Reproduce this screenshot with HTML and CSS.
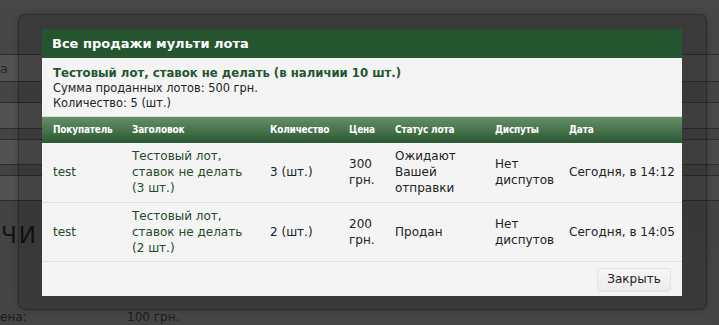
FILE: index.html
```html
<!DOCTYPE html>
<html lang="ru">
<head>
<meta charset="utf-8">
<title>Все продажи мульти лота</title>
<link rel="stylesheet" href="styles.css">
</head>
<body>
<div class="page">
  <div class="bg-row bg-row-a"><span class="bg-cell">а</span><span class="bg-cell bg-faint">Тар</span></div>
  <div class="bg-row bg-row-b"></div>
  <div class="bg-row bg-row-c"></div>
  <div class="bg-row bg-row-d"></div>
  <div class="bg-heading">ЧИ</div>
  <div class="bg-line"><span class="bg-label">ена:</span><span class="bg-value">100 грн.</span></div>
</div>

<div class="overlay">
  <div class="modal">
    <div class="modal-header">Все продажи мульти лота</div>
    <div class="modal-info">
      <div class="lot-title">Тестовый лот, ставок не делать (в наличии 10 шт.)</div>
      <div>Сумма проданных лотов: 500 грн.</div>
      <div>Количество: 5 (шт.)</div>
    </div>
    <table class="sales">
      <colgroup>
        <col class="c1"><col class="c2"><col class="c3"><col class="c4"><col class="c5"><col class="c6"><col class="c7">
      </colgroup>
      <thead>
        <tr>
          <th>Покупатель</th><th>Заголовок</th><th>Количество</th><th>Цена</th><th>Статус лота</th><th>Диспуты</th><th>Дата</th>
        </tr>
      </thead>
      <tbody>
        <tr>
          <td class="green">test</td>
          <td class="green">Тестовый лот, ставок не делать (3 шт.)</td>
          <td>3 (шт.)</td>
          <td>300 грн.</td>
          <td>Ожидают Вашей отправки</td>
          <td>Нет диспутов</td>
          <td>Сегодня, в 14:12</td>
        </tr>
        <tr>
          <td class="green">test</td>
          <td class="green">Тестовый лот, ставок не делать (2 шт.)</td>
          <td>2 (шт.)</td>
          <td>200 грн.</td>
          <td>Продан</td>
          <td>Нет диспутов</td>
          <td>Сегодня, в 14:05</td>
        </tr>
      </tbody>
    </table>
    <div class="modal-footer">
      <button class="btn">Закрыть</button>
    </div>
  </div>
</div>
</body>
</html>
```

FILE: styles.css
```css
* { box-sizing: border-box; }

html, body {
  margin: 0;
  padding: 0;
}

body {
  width: 719px;
  height: 325px;
  overflow: hidden;
  background: linear-gradient(#474747, #424242 60%, #454545);
  font-family: "DejaVu Sans", Verdana, sans-serif;
  position: relative;
}

/* dimmed page behind the dialog */
.page {
  padding-top: 54px;
  color: #1c1c1c;
}

.bg-row {
  border-top: 1px solid #2e2e2e;
  border-bottom: 1px solid #2e2e2e;
  background: linear-gradient(90deg, #525252, #4a4a4a);
  font-size: 13px;
}

.bg-row-a { height: 28px; margin-bottom: 20px; display: flex; align-items: center; gap: 8px; }
.bg-row-b { height: 27px; margin-bottom: 10px; }
.bg-row-c { height: 26px; margin-bottom: 10px; }
.bg-row-d { height: 26px; }

.bg-cell { color: #262626; }
.bg-faint { color: #555; }

.bg-heading {
  font-size: 23px;
  line-height: 30px;
  height: 30px;
  margin-top: 19px;
  margin-left: 1px;
  letter-spacing: 2px;
  color: #141414;
}

.bg-line {
  margin-top: 60px;
  display: flex;
  font-size: 12px;
  line-height: 15px;
  color: #1a1a1a;
}

.bg-label { width: 127px; }

/* dialog */
.overlay {
  position: absolute;
  left: 18px;
  top: 14px;
  width: 689px;
  height: 296px;
  background: rgba(0, 0, 0, 0.16);
  border: 1px solid rgba(0, 0, 0, 0.25);
  border-radius: 7px;
  padding: 14px 24px 0 23px;
  box-shadow: 0 0 6px rgba(0, 0, 0, 0.2);
}

.modal {
  width: 640px;
  height: 267px;
  background: #f4f4f4;
  display: flex;
  flex-direction: column;
  font-size: 12px;
  color: #222;
}

.modal-header {
  height: 29px;
  background: #24552f;
  color: #fff;
  font-weight: bold;
  font-size: 13px;
  line-height: 29px;
  padding-left: 10px;
}

.modal-info {
  padding: 7px 11px 5px;
  line-height: 15px;
  font-size: 11.4px;
  border-bottom: 1px solid #dcdcdc;
}

.lot-title {
  color: #24552f;
  font-weight: bold;
  font-size: 11.7px;
  line-height: 16px;
}

.sales {
  width: 640px;
  border-collapse: collapse;
  table-layout: fixed;
}

.c1 { width: 79px; }
.c2 { width: 138px; }
.c3 { width: 79px; }
.c4 { width: 46px; }
.c5 { width: 100px; }
.c6 { width: 74px; }
.c7 { width: 124px; }

.sales th {
  background: linear-gradient(#668f68, #2a5832);
  color: #fff;
  font-family: "DejaVu Sans Condensed", "DejaVu Sans", sans-serif;
  font-weight: bold;
  font-size: 10px;
  letter-spacing: -0.2px;
  text-align: left;
  height: 26px;
  padding: 0 4px 0 11px;
  line-height: 16px;
}

.sales td {
  height: 59px;
  padding: 0 6px 0 11px;
  line-height: 16px;
  vertical-align: middle;
  border-bottom: 1px solid #e0e0e0;
  color: #222;
}

.sales td.green { color: #24482b; }

.modal-footer {
  flex: 1;
  display: flex;
  justify-content: flex-end;
  align-items: flex-start;
  padding: 6px 11px 0 0;
}

.btn {
  width: 74px;
  height: 23px;
  font-family: "DejaVu Sans", Verdana, sans-serif;
  font-size: 12px;
  color: #222;
  background: linear-gradient(#f6f6f6, #ececec);
  border: 1px solid #e4e4e4;
  border-radius: 3px;
  box-shadow: 0 1px 1px rgba(0, 0, 0, 0.06);
  padding: 0;
}
```
